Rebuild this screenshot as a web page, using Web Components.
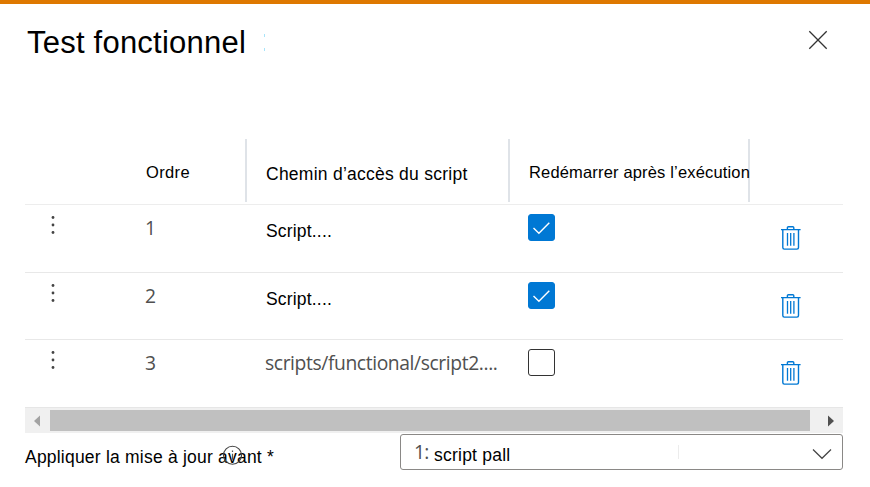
<!DOCTYPE html>
<html lang="fr"><head><meta charset="utf-8"><title>Test fonctionnel</title>
<style>html,body{margin:0;background:#fff}body{width:870px;height:487px;overflow:hidden}</style></head>
<body><test-panel></test-panel>
<script>
const define=(name,html,init)=>customElements.define(name,class extends HTMLElement{
  connectedCallback(){
    if(this.shadowRoot)return;
    const t=document.createElement('template');t.innerHTML=html;
    this.attachShadow({mode:'open'}).append(t.content.cloneNode(true));
    if(init)init.call(this);
  }
});

/* One line of text whose tracking is adjusted to a given width */
define('fit-text',`<style>:host{display:block;white-space:nowrap;font:17.5px/24px "Liberation Sans",Arial,sans-serif;color:#000;width:max-content}
:host([soft]){font-family:"Open Sans","Noto Sans",sans-serif;font-size:19.3px;color:#505050}</style><span><slot></slot></span>`,function(){
  const size=this.getAttribute('size');if(size)this.style.fontSize=size+'px';
  const w=+this.getAttribute('w');
  if(w){const s=this.shadowRoot.querySelector('span');
    s.style.letterSpacing=((w-s.getBoundingClientRect().width)/this.textContent.length)+'px';}
});
define('close-icon',`<style>:host{display:block;width:20px;height:20px}svg{display:block}</style>
<svg width="20" height="20"><path d="M1.3 1.3 18.7 18.7M18.7 1.3 1.3 18.7" stroke="#333" stroke-width="1.3"/></svg>`);
define('drag-dots',`<style>:host{display:block;width:6px;height:22px}svg{display:block}</style>
<svg width="6" height="22" fill="#444"><circle cx="3" cy="3.5" r="1.4"/><circle cx="3" cy="11" r="1.4"/><circle cx="3" cy="18.5" r="1.4"/></svg>`);
define('check-box',`<style>:host{display:block;box-sizing:border-box;width:27px;height:27px;border:1px solid #333;border-radius:3px;background:#fff}
svg{display:none;margin:-1px}:host([checked]){background:#0078d4;border-color:#0078d4}:host([checked]) svg{display:block}</style>
<svg width="27" height="27"><path d="M5.5 14 10.9 19.3 21.3 8.8" fill="none" stroke="#fff" stroke-width="1.4"/></svg>`);
define('trash-icon',`<style>:host{display:block;width:20px;height:25px}svg{display:block}</style>
<svg width="20" height="25" fill="none" stroke="#0078d4" stroke-width="1.4"><path d="M0 3.6H19.6M6.4 3.6V1.7Q6.4 .7 7.4 .7H11.8Q12.8 .7 12.8 1.7V3.6M1.8 3.6V21.6Q1.8 23.1 3.3 23.1H16Q17.5 23.1 17.5 21.6V3.6"/><path d="M6.5 7V19.7M9.7 7V19.7M12.9 7V19.7" stroke-width="1.3"/></svg>`);
define('info-icon',`<style>:host{display:block;width:20px;height:20px}svg{display:block}</style>
<svg width="20" height="20"><circle cx="10.5" cy="10.3" r="9" fill="none" stroke="#444" stroke-width="1.1"/><path d="M10.5 8.8V14.8M10.5 5.6V7" stroke="#555" stroke-width="1.2"/></svg>`);

define('grid-head',`<style>:host{display:grid;grid-template-columns:220px 263px 240px 95px;height:65px;border-bottom:1px solid #ededed;box-sizing:content-box}
div{box-sizing:border-box;height:63px;border-right:2px solid #dfe3e8}div:last-child{border:0}
.a{padding:21px 0 0 121px;width:222px}.b{padding:23px 0 0 21px;width:265px}.c{padding:21px 0 0 21px;width:242px}</style>
<div class="a"><fit-text w="44" size="16.5">Ordre</fit-text></div>
<div class="b"><fit-text w="201.5" size="17.5">Chemin d’accès du script</fit-text></div>
<div class="c"><fit-text w="221" size="16.5">Redémarrer après l’exécution</fit-text></div><div></div>`);
define('grid-row',`<style>:host{display:grid;grid-template-columns:25px 95px 120px 263px 253px 62px;align-items:start;height:67px;border-bottom:1px solid #e8e8e8}
:host([short]){height:66px}:host([last]){height:67px;border:0}
drag-dots{margin:9px 0 0 25px}.n{padding-top:11px;grid-column:3}.p{padding-top:14px;margin-left:1px}.p.soft{padding-top:11px;margin-left:0}check-box{margin-top:9px}trash-icon{margin-top:21px}</style>
<drag-dots></drag-dots><div class="n"><slot name="n"></slot></div><div class="p"><slot></slot></div><check-box></check-box><trash-icon></trash-icon>`,function(){
  if(this.hasAttribute('checked'))this.shadowRoot.querySelector('check-box').setAttribute('checked','');
  if(this.hasAttribute('last'))this.shadowRoot.querySelector('.p').classList.add('soft');
});
define('scroll-bar',`<style>:host{display:flex;box-sizing:border-box;height:26px;background:#f0f0f0;border-top:1px solid #e6e6e6;padding:2px 8px 0 8px}
i{width:760px;height:21px;margin:0 auto 0 9px;background:#c0c0c0}svg{display:block;margin-top:5px}</style>
<svg width="8" height="12"><path d="M7 .5V11.5L1 6Z" fill="#a3a3a3"/></svg><i></i><svg width="8" height="12"><path d="M1 .5V11.5L7 6Z" fill="#505050"/></svg>`);
define('select-box',`<style>:host{display:flex;align-items:flex-start;box-sizing:border-box;width:443px;height:36px;border:1px solid #8a8886;border-radius:3px;padding-left:13px}
.one{margin-top:5px;width:20px}.txt{margin-top:8px}hr{margin:10px 0 0 auto;border:0;width:1px;height:14px;background:#ececec}svg{margin:13px 10px 0 133px}</style>
<fit-text class="one" soft w="14.5">1:</fit-text><fit-text class="txt" w="76.5" size="17.5">script pall</fit-text><hr>
<svg width="20" height="12"><path d="M1 1.5 10 10.3 19 1.5" fill="none" stroke="#444" stroke-width="1.2"/></svg>`);
define('field-label',`<style>:host{display:block;position:relative;padding-top:11px}info-icon{position:absolute;left:197px;top:11px}</style>
<fit-text w="249" size="17.5">Appliquer la mise à jour avant *</fit-text><info-icon></info-icon>`);
define('panel-header',`<style>:host{display:flex;align-items:flex-start;padding:20px 42px 0 27px;height:115px}
fit-text{line-height:36px;margin-top:1px}.m{width:1px;height:11px;margin:10px auto 0 18px;border:solid #a8e4fa;border-width:3px 0}close-icon{margin-top:6px}</style>
<fit-text w="219" size="31">Test fonctionnel</fit-text><span class="m"></span><close-icon></close-icon>`);
define('test-panel',`<style>:host{display:block;width:870px;height:487px;box-sizing:border-box;border-top:4px solid #de7800;background:#fff;overflow:hidden}
main{margin:0 27px 0 25px}footer{display:flex;justify-content:space-between;padding-top:1px}</style>
<panel-header></panel-header><main><grid-head></grid-head>
<grid-row checked><fit-text slot="n" soft>1</fit-text><fit-text w="66">Script....</fit-text></grid-row>
<grid-row checked short><fit-text slot="n" soft>2</fit-text><fit-text w="66">Script....</fit-text></grid-row>
<grid-row last><fit-text slot="n" soft>3</fit-text><fit-text soft w="232.5">scripts/functional/script2....</fit-text></grid-row>
<scroll-bar></scroll-bar><footer><field-label></field-label><select-box></select-box></footer></main>`);
</script></body></html>
